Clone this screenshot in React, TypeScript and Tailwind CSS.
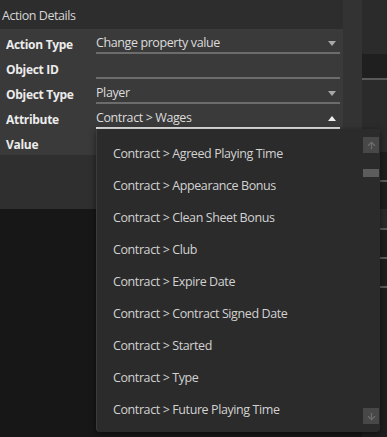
import { ArrowUp, ArrowDown } from 'lucide-react'

const ROWS = [
  { label: 'Action Type', value: 'Change property value', arrow: 'down' },
  { label: 'Object ID', value: '', arrow: '' },
  { label: 'Object Type', value: 'Player', arrow: 'down' },
  { label: 'Attribute', value: 'Contract > Wages', arrow: 'up' },
]

const OPTIONS = [
  'Contract > Agreed Playing Time',
  'Contract > Appearance Bonus',
  'Contract > Clean Sheet Bonus',
  'Contract > Club',
  'Contract > Expire Date',
  'Contract > Contract Signed Date',
  'Contract > Started',
  'Contract > Type',
  'Contract > Future Playing Time',
]

function Caret({ up }: { up?: boolean }) {
  return (
    <svg width="8" height="5" viewBox="0 0 8 5" className="mr-[4px]">
      {up ? <polygon points="0,5 8,5 4,0" fill="#f0f0f0" /> : <polygon points="0,0 8,0 4,5" fill="#a8a8a8" />}
    </svg>
  )
}

export default function App() {
  return (
    <div
      className="relative w-[387px] h-[437px] overflow-hidden bg-[#171717] text-[12px]"
      style={{ fontFamily: '"Open Sans", "Noto Sans", sans-serif' }}
    >
      {/* top area */}
      <div className="flex h-[209px]">
        {/* Action details panel */}
        <div className="w-[343px] flex flex-col bg-[#2f2f2f]">
          <div className="h-[29px] pl-[2px] pt-[7px] leading-[18px] bg-[#2d2d2d] text-[#d6d6d6] text-[12.5px] tracking-[-0.45px]">
            Action Details
          </div>
          <div className="bg-[#3a3a3a] h-[126px] flex flex-col">
            {ROWS.map(r => (
              <div key={r.label} className="h-[25px] flex">
                <div className="w-[96px] pl-[6px] pt-[9px] font-bold text-[#ececec] tracking-[-0.3px] leading-[14px]">{r.label}</div>
                <div
                  className={`flex-1 mr-[3px] pt-[5px] flex items-center justify-between text-[#dcdcdc] text-[12.5px] tracking-[-0.4px] border-b-2 ${
                    r.arrow === 'up' ? 'border-[#e0e0e0]' : 'border-[#6c6c6c]'
                  }`}
                >
                  <span>{r.value}</span>
                  {r.arrow && <Caret up={r.arrow === 'up'} />}
                </div>
              </div>
            ))}
            <div className="h-[25px] flex">
              <div className="w-[96px] pl-[6px] pt-[9px] font-bold text-[#ececec] tracking-[-0.3px] leading-[14px]">Value</div>
            </div>
          </div>
        </div>
        {/* middle column */}
        <div className="w-[19px] bg-[#333333]" />
        {/* right side form fragments */}
        <div className="flex-1 flex flex-col bg-[#2b2b2b]">
          <div className="h-[54px]" />
          <div className="h-[26px] bg-[#1f1f1f] border-b-2 border-[#5a5a5a]" />
          <div className="h-[72px]" />
          <div className="h-[30px] bg-[#1e1e1e] border-b-2 border-[#5a5a5a]" />
          <div className="flex-1 bg-[#1e1e1e]" />
        </div>
      </div>
      <div className="flex h-[228px]">
        <div className="w-[362px]" />
        <div className="flex-1 flex flex-col bg-[#1e1e1e]">
          <div className="h-[21px] border-b-2 border-[#5a5a5a] bg-[#2a2a2a]" />
          <div className="h-[29px] border-b-2 border-[#5a5a5a]" />
          <div className="h-[29px] border-b-2 border-[#5a5a5a]" />
        </div>
      </div>

      {/* dropdown list */}
      <div className="absolute left-[96px] top-[129px] w-[284px] h-[303px] bg-[#2b2b2b] rounded-b-[4px] border-l border-[#3c3c3c] shadow-[0_2px_6px_rgba(0,0,0,0.5)] flex">
        <div className="flex-1 pt-[9px] flex flex-col">
          {OPTIONS.map(o => (
            <div key={o} className="h-[32px] flex items-center pl-[16px] text-[#d2d2d2] text-[12.5px] tracking-[-0.4px]">
              {o}
            </div>
          ))}
        </div>
        <div className="w-[16px] mr-[1px] pt-[8px] pb-[8px] flex flex-col">
          <div className="h-[16px] bg-[#484848] flex items-center justify-center">
            <ArrowUp size={11} strokeWidth={2.5} color="#6e6e6e" />
          </div>
          <div className="h-[8px] mt-[16px] bg-[#5c5c5c]" />
          <div className="flex-1" />
          <div className="h-[16px] bg-[#484848] flex items-center justify-center">
            <ArrowDown size={11} strokeWidth={2.5} color="#6e6e6e" />
          </div>
        </div>
      </div>
    </div>
  )
}
